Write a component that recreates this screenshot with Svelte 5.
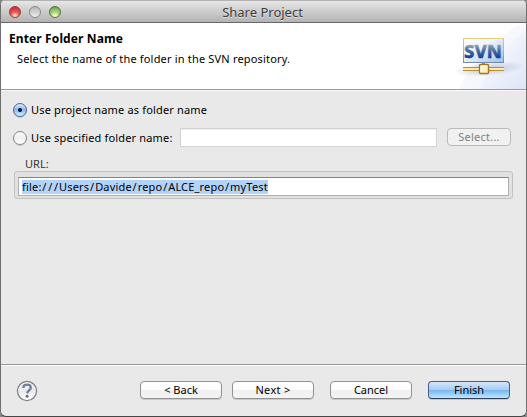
<script>
  let choice = $state('project');
  const url = 'file:///Users/Davide/repo/ALCE_repo/myTest';
  const parts = url.split(/(\/+)/);
</script>

<div class="window">
  <header class="titlebar">
    <div class="lights"><i class="red"></i><i class="gray"></i><i class="green"></i></div>
    <span class="title">Share Project</span>
  </header>

  <section class="banner">
    <div class="heading">
      <h1><span>Enter Folder Name</span></h1>
      <p><span>Select the name of the folder in the SVN repository.</span></p>
    </div>
    <svg class="art" width="80" height="66" viewBox="0 0 80 66">
      <defs>
        <linearGradient id="sweep" x1="0" y1="0" x2="1" y2="1">
          <stop offset="0" stop-color="#fff" />
          <stop offset="1" stop-color="#dbe3f7" />
        </linearGradient>
        <linearGradient id="plate" x1="0" y1="0" x2="1" y2="1">
          <stop offset="0" stop-color="#fff" />
          <stop offset=".4" stop-color="#eef4fa" />
          <stop offset="1" stop-color="#9cc3e6" />
        </linearGradient>
        <linearGradient id="edge" x1="0" y1="0" x2="0" y2="1">
          <stop offset="0" stop-color="#e5c97c" />
          <stop offset=".5" stop-color="#b9b7a0" />
          <stop offset="1" stop-color="#7189b0" />
        </linearGradient>
        <linearGradient id="ink" gradientUnits="userSpaceOnUse" x1="0" y1="21" x2="0" y2="35">
          <stop offset="0" stop-color="#a3abb6" />
          <stop offset=".45" stop-color="#4c6ca3" />
          <stop offset="1" stop-color="#123f98" />
        </linearGradient>
        <radialGradient id="shade">
          <stop offset="0" stop-color="#adb5c5" />
          <stop offset="1" stop-color="#adb5c5" stop-opacity="0" />
        </radialGradient>
      </defs>
      <path d="M80 0C66 4 56 12 47 22C33 36 20 50 13 66H80Z" fill="url(#sweep)" opacity=".5" />
      <path d="M80 8C60 22 44 42 34 66H80Z" fill="url(#sweep)" opacity=".8" />
      <ellipse cx="43" cy="46" rx="36" ry="7" fill="url(#shade)" opacity=".75" transform="rotate(-5 43 46)" />
      <rect x="17.5" y="15.5" width="40" height="24" fill="url(#plate)" stroke="url(#edge)" />
      <text x="18" y="35.3" textLength="38" lengthAdjust="spacingAndGlyphs" fill="url(#ink)" stroke="url(#ink)" stroke-width=".4">SVN</text>
      <path d="M37.5 40V43" stroke="#b09358" stroke-width="3" />
      <path d="M17 46H58" stroke="#b98e36" stroke-width="4" />
      <path d="M17 46H58" stroke="#fbe8b2" stroke-width="2" />
      <rect x="33.5" y="41.5" width="9" height="9" rx="1" fill="#fff0c2" stroke="#a17625" stroke-width="1.4" />
      <path d="M35 49V43H41" fill="none" stroke="#fffbea" />
    </svg>
  </section>

  <main>
    <div class="row first">
      <button class="radio" class:on={choice === 'project'} aria-label="Use project name" onclick={() => (choice = 'project')}></button>
      <span class="opt1">Use project name as folder name</span>
    </div>
    <div class="row second">
      <button class="radio" class:on={choice === 'custom'} aria-label="Use specified name" onclick={() => (choice = 'custom')}></button>
      <span class="opt2">Use specified folder name:</span>
      <div class="blank"></div>
      <button class="btn select"><span>Select...</span></button>
    </div>
    <div class="caption"><span>URL:</span></div>
    <div class="group">
      <div class="field"><span class="url">{#each parts as part}<span class:slash={part.startsWith('/')}>{part}</span>{/each}</span></div>
    </div>
  </main>

  <footer>
    <svg class="help" width="22" height="22" viewBox="0 0 22 22">
      <defs>
        <linearGradient id="glass" x1="0" y1="0" x2="0" y2="1">
          <stop offset="0" stop-color="#f6f6f6" />
          <stop offset=".5" stop-color="#e9e9e9" />
          <stop offset="1" stop-color="#fff" />
        </linearGradient>
      </defs>
      <circle cx="11" cy="11" r="9.6" fill="url(#glass)" stroke="#7b8088" stroke-width="1.2" />
      <path d="M7.3 8C7.4 5.7 8.8 4.7 11 4.7C13.2 4.7 14.8 5.8 14.8 7.8C14.8 10.3 11.4 10.2 11.2 13.4" fill="none" stroke="#6f7f96" stroke-width="2.3" />
      <circle cx="11.1" cy="16.3" r="1.5" fill="#66717f" />
    </svg>
    <button class="btn back"><span>&lt; Back</span></button>
    <button class="btn next"><span>Next &gt;</span></button>
    <button class="btn cancel"><span>Cancel</span></button>
    <button class="btn finish"><span>Finish</span></button>
  </footer>
</div>

<style>
  :global(body) { margin: 0; background: #868686; overflow: hidden; }
  .window {
    box-sizing: border-box;
    width: 527px;
    height: 417px;
    display: flex;
    flex-direction: column;
    background: #e9e9e9;
    border: solid #6f6f6f;
    border-width: 0 1px 1px;
    border-bottom-color: #464646;
    border-radius: 5px 5px 6px 6px;
    overflow: hidden;
    font: 11px/14px "Noto Sans", "Open Sans", sans-serif;
    color: #000;
  }
  span { white-space: nowrap; }
  .titlebar {
    box-sizing: border-box;
    height: 23px;
    display: grid;
    grid-template-columns: 64px 1fr 64px;
    align-items: center;
    border-top: 1px solid #b2b2b2;
    border-bottom: 1px solid #686868;
    background: linear-gradient(#e6e6e6, #b3b3b3);
  }
  .lights { display: flex; gap: 8px; padding-left: 8px; }
  .lights i {
    box-sizing: border-box;
    width: 12px;
    height: 12px;
    border-radius: 50%;
    border: 1px solid #6d6d6d;
  }
  .lights .red { background: radial-gradient(circle at 50% 90%, #ffd0bd 0 12%, #ee6862 35%, #df3d3d 65%, #b52a2a); border-color: #943e3b; }
  .lights .gray { background: linear-gradient(#b9b9b9, #d0d0d0 50%, #eee); border-color: #888; }
  .lights .green { background: radial-gradient(circle at 50% 90%, #fff2c8 0 12%, #acd580 38%, #80bd5c 70%, #568444); border-color: #587047; }
  .title { text-align: center; font-size: 13px; line-height: 18px; color: #3d3d3d; text-shadow: 0 1px #e2e2e2; padding-right: 2px; }
  .banner {
    box-sizing: border-box;
    height: 67px;
    display: flex;
    justify-content: space-between;
    background: #fff;
    border-bottom: 1px solid #999;
  }
  .heading { padding: 8px 0 0 8px; }
  h1 { margin: 0; font-size: 12px; line-height: 15px; font-weight: 700; letter-spacing: .12px; }
  p { margin: 6px 0 0 8px; line-height: 14px; letter-spacing: .18px; }
  .art text { font: 800 18px "Noto Sans", sans-serif; }
  main {
    box-sizing: border-box;
    height: 274px;
    border-top: 1px solid #fafafa;
    padding: 11px 12px 0 13px;
  }
  .row { display: flex; align-items: center; }
  .first { height: 15px; }
  .second { height: 19px; margin-top: 11px; }
  .radio {
    box-sizing: border-box;
    flex: none;
    width: 14px;
    height: 14px;
    margin: 0 4px 0 -1px;
    padding: 0;
    border: 1px solid #888;
    border-radius: 50%;
    background: linear-gradient(#f8f8f8, #f0f0f0 50%, #fff);
    box-shadow: 0 1px #c9c9c9;
  }
  .radio.on {
    border-color: #486593;
    background: radial-gradient(circle, #0b1f50 0 1.6px, transparent 2.4px), linear-gradient(#d8e9fa, #87b8eb 50%, #d4f2ff);
  }
  .opt1, .opt2 { letter-spacing: .165px; }
  .opt2 { width: 149px; }
  .blank {
    box-sizing: border-box;
    width: 257px;
    height: 19px;
    background: #fff;
    border: 1px solid #d3d3d3;
    box-shadow: inset 0 1px #efefef;
  }
  .btn {
    box-sizing: border-box;
    flex: none;
    width: 82px;
    height: 18px;
    padding: 0;
    display: flex;
    justify-content: center;
    align-items: center;
    border: 1px solid #919191;
    border-radius: 4px;
    color: #000;
    background: linear-gradient(#fff, #fbfbfb 48%, #f0f0f0 52%, #f5f5f5);
    box-shadow: 0 1px #c9c9c9;
    font: inherit;
    line-height: 14px;
  }
  .select {
    width: 64px;
    margin: -1px 0 0 10px;
    color: #818181;
    border-color: #bababa;
    background: #f1f1f1;
    box-shadow: none;
    letter-spacing: .25px;
  }
  .next { letter-spacing: .3px; }
  .caption { margin: 10px 0 0 11px; height: 14px; color: #333; }
  .group {
    box-sizing: border-box;
    width: 499px;
    height: 28px;
    padding: 5px 3px 2px;
    background: #e1e1e1;
    border: 1px solid #c2c2c2;
    border-radius: 3px;
  }
  .field {
    box-sizing: border-box;
    height: 19px;
    padding: 2px 3px;
    background: #fff;
    border: 1px solid #b0b0b0;
    border-top-color: #848484;
  }
  .url { display: inline-block; height: 14px; background: #b1d3fc; vertical-align: top; letter-spacing: .18px; }
  .slash { letter-spacing: 1.75px; margin-left: .8px; margin-right: -.8px; }
  footer {
    box-sizing: border-box;
    flex: 1;
    display: flex;
    align-items: flex-start;
    padding: 15px 15px 0;
    border-top: 1px solid #969696;
    box-shadow: inset 0 1px #fff;
  }
  .help { margin-right: 102px; }
  .back, .next { margin-right: 10px; }
  .cancel { margin: 0 16px 0 6px; }
  footer .btn { margin-top: 1px; }
  .finish {
    border-color: #465c8b;
    border-bottom-color: #303e61;
    background: linear-gradient(#d5e7fa, #a6cdf6 47%, #78b3ef 50%, #bce9ff);
  }
</style>
